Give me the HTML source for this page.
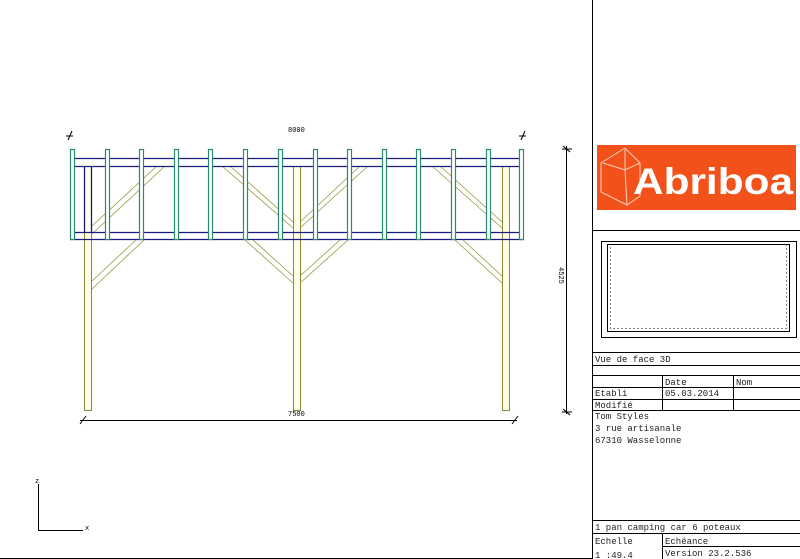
<!DOCTYPE html>
<html><head><meta charset="utf-8"><style>
html,body{margin:0;padding:0;background:#fff;}
svg{display:block}
text{font-family:"Liberation Mono",monospace;}
</style></head><body>
<svg width="800" height="559" viewBox="0 0 800 559" xmlns="http://www.w3.org/2000/svg">
<rect width="800" height="559" fill="#fff"/>
<g fill="#fffde8" stroke="#8a8a30" stroke-width="1">
<rect x="84.5" y="166.5" width="7" height="244"/>
<rect x="293.5" y="166.5" width="7" height="244"/>
<rect x="502.5" y="166.5" width="7" height="244"/>
</g>
<g stroke="#9a9a40" stroke-width="0.8" fill="none">
<path d="M92 226 L157 166 M92 234 L165 166"/>
<path d="M92 281 L136 240 M92 289 L144 240"/>
<path d="M222 166 L293 228 M230 166 L293 222"/>
<path d="M300 228 L368 166 M300 222 L360 166"/>
<path d="M245 240 L293 283 M253 240 L293 276"/>
<path d="M300 283 L348 240 M300 276 L340 240"/>
<path d="M432 166 L502 228 M440 166 L502 222"/>
<path d="M455 240 L502 283 M463 240 L502 276"/>
</g>
<g stroke="#1c1c80" stroke-width="1.3">
<line x1="70" y1="158.5" x2="524" y2="158.5"/>
<line x1="70" y1="166.5" x2="524" y2="166.5"/>
<line x1="70" y1="232.5" x2="524" y2="232.5"/>
<line x1="70" y1="239.5" x2="524" y2="239.5"/>
<line x1="84.5" y1="166" x2="84.5" y2="232"/>
<line x1="91.5" y1="166" x2="91.5" y2="232"/>
</g>
<g fill="#fff" stroke="#2a8a70" stroke-width="1.2">
<rect x="70.5" y="149.5" width="4" height="90"/>
<rect x="105.5" y="149.5" width="4" height="90"/>
<rect x="139.5" y="149.5" width="4" height="90"/>
<rect x="174.5" y="149.5" width="4" height="90"/>
<rect x="208.5" y="149.5" width="4" height="90"/>
<rect x="243.5" y="149.5" width="4" height="90"/>
<rect x="278.5" y="149.5" width="4" height="90"/>
<rect x="313.5" y="149.5" width="4" height="90"/>
<rect x="347.5" y="149.5" width="4" height="90"/>
<rect x="382.5" y="149.5" width="4" height="90"/>
<rect x="416.5" y="149.5" width="4" height="90"/>
<rect x="451.5" y="149.5" width="4" height="90"/>
<rect x="486.5" y="149.5" width="4" height="90"/>
<rect x="519.5" y="149.5" width="4" height="90"/>
</g>
<g stroke="#000" stroke-width="1" fill="none">
<line x1="80" y1="420.5" x2="517" y2="420.5"/>
<path d="M80 424 L86 416 M512 424 L518 416"/>
<line x1="566.5" y1="146" x2="566.5" y2="414"/>
<path d="M562 149 L572 149 M563 146 L570 152 M562 412 L572 412 M563 409 L570 415"/>
<path d="M68 140 L72 131 M66 136 L73 136 M521 140 L525 131 M519 136 L526 136"/>
<line x1="38.5" y1="484" x2="38.5" y2="531"/>
<line x1="38" y1="530.5" x2="83" y2="530.5"/>
</g>
<g font-size="7" fill="#000">
<text x="288" y="132">8000</text>
<text x="288" y="416">7500</text>
<text x="0" y="0" transform="translate(559,267) rotate(90)">4525</text>
<text x="35" y="483">z</text>
<text x="85" y="530">x</text>
</g>
<g stroke="#000" stroke-width="1" fill="none">
<line x1="592.5" y1="0" x2="592.5" y2="559"/>
<line x1="592" y1="230.5" x2="800" y2="230.5"/>
<line x1="592" y1="352.5" x2="800" y2="352.5"/>
<line x1="592" y1="365.5" x2="800" y2="365.5"/>
<line x1="592" y1="375.5" x2="800" y2="375.5"/>
<line x1="592" y1="387.5" x2="800" y2="387.5"/>
<line x1="592" y1="399.5" x2="800" y2="399.5"/>
<line x1="592" y1="410.5" x2="800" y2="410.5"/>
<line x1="662.5" y1="375" x2="662.5" y2="410"/>
<line x1="733.5" y1="375" x2="733.5" y2="410"/>
<line x1="592" y1="520.5" x2="800" y2="520.5"/>
<line x1="592" y1="533.5" x2="800" y2="533.5"/>
<line x1="662.5" y1="533" x2="662.5" y2="559"/>
<line x1="662" y1="546.5" x2="800" y2="546.5"/>
<line x1="0" y1="558.5" x2="592" y2="558.5"/>
<rect x="601.5" y="241.5" width="195" height="96"/>
<rect x="607.5" y="244.5" width="182" height="87"/>
<rect x="610.5" y="244.5" width="176" height="84" stroke-dasharray="1 3"/>
</g>
<rect x="597" y="145" width="199" height="65" fill="#f2521a"/>
<g stroke="#ffd0b8" stroke-width="1" fill="none">
<path d="M601 163 L625 148 L640 163 L640 196 L627 205 L601 192 Z M625 148 L625 170 M603 163 L625 170 L640 163 M625 170 L627 205"/>
</g>
<text x="633" y="194" font-weight="bold" font-size="37" fill="#fff" textLength="160" lengthAdjust="spacingAndGlyphs" style="font-family:'Liberation Sans',sans-serif">Abriboa</text>
<g font-size="9" fill="#222">
<text x="595" y="362">Vue de face 3D</text>
<text x="665" y="385">Date</text>
<text x="736" y="385">Nom</text>
<text x="595" y="396">Etabli</text>
<text x="665" y="396">05.03.2014</text>
<text x="595" y="408">Modifié</text>
<text x="595" y="419">Tom Styles</text>
<text x="595" y="431">3 rue artisanale</text>
<text x="595" y="443">67310 Wasselonne</text>
<text x="595" y="530">1 pan camping car 6 poteaux</text>
<text x="595" y="544">Echelle</text>
<text x="665" y="544">Echéance</text>
<text x="595" y="558">1 :49.4</text>
<text x="665" y="556">Version 23.2.536</text>
</g>
</svg>
</body></html>
